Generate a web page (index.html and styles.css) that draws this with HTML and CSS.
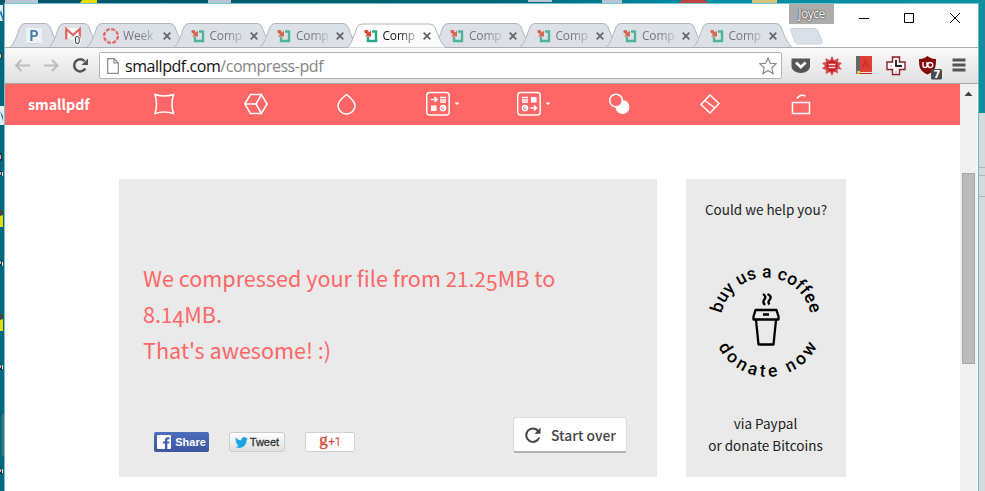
FILE: index.html
```html
<!DOCTYPE html>
<html lang="en">
<head>
<meta charset="utf-8">
<title>Smallpdf</title>
<link rel="stylesheet" href="styles.css">
</head>
<body>
<svg width="0" height="0" class="defs">
  <defs>
    <symbol id="tab" viewBox="0 0 99 24"><path d="M0 24C4 22 7 12 10 4Q11.500 .5 15 .5H83Q86.500 .5 88 4C91 12 95 22 99 24" stroke="#b2b6bb"/></symbol>
    <symbol id="pin" viewBox="0 0 51 24"><path d="M0 24C4 22 7 12 10 4Q11.500 .5 15 .5H35Q38.500 .5 40 4C43 12 47 22 51 24" stroke="#b2b6bb"/></symbol>
    <symbol id="fav" viewBox="0 0 16 16"><path d="M9 3.500H13V13H5V9" fill="none" stroke="#2aa886" stroke-width="2.400"/><path d="M8 2.500V8.500H2L4 6.500 1.500 4.500V2H4.500L6 4.500z" fill="#d34b2c"/></symbol>
    <symbol id="x" viewBox="0 0 10 10"><path d="M1.700 1.700l6.600 6.600M8.300 1.700L1.700 8.300" stroke="#666" stroke-width="1.800"/></symbol>
  </defs>
</svg>
<svg class="desktop" width="985" height="491">
  <defs><linearGradient id="sea"><stop stop-color="#005466"/><stop offset=".5" stop-color="#006476"/><stop offset=".7" stop-color="#008ca3"/><stop offset="1" stop-color="#10909f"/></linearGradient></defs>
  <rect width="985" height="4" fill="url(#sea)"/>
  <rect y="4" width="5" height="487" fill="#00687d"/>
  <path d="M5 0h33v3H5zM208 0h23v3h-23zM528 0h24v2h-24zM602 0h20v3h-20z" fill="#b9c5d2"/>
  <path d="M752 0h25v3h-25z" fill="#d2c47a"/>
  <path d="M82 0h15v3H80z" fill="#e9dd00"/>
  <path d="M682 0h22l5 3h-31z" fill="#bd4640"/>
  <path d="M0 5h3v16H0zM0 106h4v19H0z" fill="#e2edf5"/>
  <path d="M0 13l3 8v-4L1 10zM0 111l3 10v-5z" fill="#1b69b6"/>
  <path d="M0 214h3v13H0zM0 318h3v13H0z" fill="#e2df08"/>
  <path d="M0 210h3v5l-3 1zM0 314h3v5l-3 1z" fill="#444"/>
  <path d="M0 53h2v6H0zM0 153h2v8H0zM0 171h2v5H0zM0 260h2v6H0zM0 364h2v6H0zM0 468h2v6H0z" fill="#17344a"/>
  <path d="M0 54h1v4H0zM0 155h1v4H0zM0 172h1v3H0zM0 261h1v3H0zM0 365h1v3H0zM0 469h1v3H0z" fill="#f4b384"/>
  <path d="M2 172h1v4H2zM2 262h1v4H2zM2 365h1v4H2zM2 469h1v4H2z" fill="#d8f0ff"/>
  <path d="M3 414v42" stroke="#8b7771"/>
  <rect x="978" y="3" width="7" height="111" fill="#168b9c"/>
  <rect x="978" y="113" width="7" height="378" fill="#d9d9d9"/>
  <path d="M979 167.500h6M979 175.500h6M979 196.500h6" stroke="#b3b3b3"/>
</svg>
<div class="window">
  <div class="titlebar">
    <div class="tabs">
      <div class="tab pin"><svg class="bg"><use href="#pin"/></svg>
        <svg class="ico" viewBox="0 0 16 16"><rect width="16" height="16" rx="1.500" fill="#f4f6f8"/><path d="M1 15.500h14" stroke="#ccd3d9"/><text x="3.400" y="13.300" class="p">P</text></svg></div>
      <div class="tab pin"><svg class="bg"><use href="#pin"/></svg>
        <svg class="ico" viewBox="0 0 16 16"><rect x="0" y="0" width="15" height="11.500" fill="#fff"/><path d="M1.200 11.500V1l6.800 6L14.800 1v10.500" fill="none" stroke="#e0483e" stroke-width="2.200"/><path d="M3 11.500l4-3M13 11.500L9 8.500" stroke="#e3c6c4"/><text x="9.500" y="15.500" class="zero">0</text></svg></div>
      <div class="tab"><svg class="bg"><use href="#tab"/></svg>
        <svg class="ico" viewBox="0 0 16 16"><circle cx="8" cy="8" r="6.900" fill="none" stroke="#e6483d" stroke-width="2.300" stroke-dasharray="3.900 1.520"/></svg><span>Week</span><svg class="x"><use href="#x"/></svg></div>
      <div class="tab"><svg class="bg"><use href="#tab"/></svg><svg class="ico"><use href="#fav"/></svg><span>Comp</span><svg class="x"><use href="#x"/></svg></div>
      <div class="tab"><svg class="bg"><use href="#tab"/></svg><svg class="ico"><use href="#fav"/></svg><span>Comp</span><svg class="x"><use href="#x"/></svg></div>
      <div class="tab active"><svg class="bg"><use href="#tab"/></svg><svg class="ico"><use href="#fav"/></svg><span>Comp</span><svg class="x"><use href="#x"/></svg></div>
      <div class="tab"><svg class="bg"><use href="#tab"/></svg><svg class="ico"><use href="#fav"/></svg><span>Comp</span><svg class="x"><use href="#x"/></svg></div>
      <div class="tab"><svg class="bg"><use href="#tab"/></svg><svg class="ico"><use href="#fav"/></svg><span>Comp</span><svg class="x"><use href="#x"/></svg></div>
      <div class="tab"><svg class="bg"><use href="#tab"/></svg><svg class="ico"><use href="#fav"/></svg><span>Comp</span><svg class="x"><use href="#x"/></svg></div>
      <div class="tab"><svg class="bg"><use href="#tab"/></svg><svg class="ico"><use href="#fav"/></svg><span>Comp</span><svg class="x"><use href="#x"/></svg></div>
      <svg class="newtab" width="34" height="17"><path d="M3 .5H24Q27 .5 28 3L32 13Q33 16 30 16H9Q6 16 5 14L.8 3Q0 .5 3 .5Z" fill="#dae0e8" stroke="#cfd3d8"/></svg>
    </div>
    <div class="user">Joyce</div>
    <svg class="controls" width="104" height="14" viewBox="0 0 104 14"><path d="M0 7.500h10M45.500 2.500h9v9h-9zM91 2l10 10M101 2L91 12" fill="none" stroke="#000"/></svg>
  </div>
  <div class="toolbar">
    <svg class="nav" width="78" height="20" viewBox="0 0 78 20"><path d="M17 9.500H3M8.500 4L3 9.500 8.500 15M31 9.500h13.500M39 4l5.500 5.500L39 15" fill="none" stroke="#bdbdbd" stroke-width="2"/><path d="M71.500 5.200A6 6 0 1 0 72.300 12.500" fill="none" stroke="#555" stroke-width="2.500"/><path d="M75 2.500V9H68.500z" fill="#555"/></svg>
    <div class="omnibox">
      <svg width="12" height="16" viewBox="0 0 12 16"><path d="M.7.7H7L11.300 5V15.300H.7zM7 .7V5h4.300" fill="#fff" stroke="#8a8a8a" stroke-width="1.200"/></svg>
      <div class="url">smallpdf.com<span>/compress-pdf</span></div>
      <svg class="star" width="18" height="18" viewBox="0 0 18 18"><path d="M9 1l2.300 5.300 5.900.5-4.400 4 1.300 5.800L9 13.500l-5.100 3.100 1.300-5.800-4.400-4 5.900-.5z" fill="#fff" stroke="#818181" stroke-width="1.100"/></svg>
    </div>
    <div class="ext">
      <svg width="20" height="20" viewBox="0 0 20 20"><path d="M.5 2.500h18.500v7.500c0 4-4 7-9.200 7S.5 14 .5 10z" fill="#555"/><path d="M5 6.500l4.800 4.500 4.800-4.500" fill="none" stroke="#fff" stroke-width="2.800"/></svg>
      <svg width="20" height="20" viewBox="0 0 20 20"><path d="M10 0l2 4.500L16.500 2l-.5 4 4 1-3 3 3 3.500-4.500-.5.500 4.500-4-2L10 20l-2-4-4.500 2 .5-4-4-1.500L3 10 0 7l4-1-.5-4L8 4.500z" fill="#d14a4a"/><circle cx="10" cy="10" r="5.500" fill="#c31f25"/><path d="M6.500 8.500h7M6.500 11.500h7" stroke="#ffd9d6" stroke-width="1.500"/></svg>
      <svg width="20" height="20" viewBox="0 0 20 20"><path d="M2 0h16v16H2z" fill="#dd4035"/><path d="M2 0h4v18H2z" fill="#65676c"/><path d="M6 16h12v2H5z" fill="#f2ded8"/><path d="M5 17.500h13" stroke="#bd3029"/><path d="M8.500 12l3-8 3 8M9.500 9.500h4" fill="none" stroke="#c9342b" stroke-width="1.700"/><path d="M3 15h3l1 2-4 1z" fill="#f6c744"/></svg>
      <svg width="20" height="20" viewBox="0 0 20 20"><path d="M6.500 1h7v5h5.500v7.500h-5.500v5h-7v-5H1V6h5.500z" fill="#fff" stroke="#891f28" stroke-width="1.400"/><path d="M10 4v6h6" fill="none" stroke="#222" stroke-width="1.800"/><path d="M4 10h2M10 15v2" stroke="#999"/></svg>
      <svg width="24" height="24" viewBox="0 0 24 24"><path d="M1 3c4 0 6-1 8.500-3 2.500 2 4.500 3 8.500 3 0 9-1 12-8.500 15.500C2 15 1 12 1 3z" fill="#850509"/><path d="M5 6v3.500q0 2 2 2t2-2V6M12.300 6.500a2.500 2.500 0 1 1 0 5 2.500 2.500 0 0 1 0-5z" fill="none" stroke="#fff" stroke-width="1.400"/><rect x="13" y="13" width="11" height="10.500" rx="1.500" fill="#4b4b4b"/><text x="15.500" y="22" class="seven">7</text></svg>
      <svg width="14" height="20" viewBox="0 0 14 20"><path d="M.5 4h13M.5 9h13M.5 14h13" stroke="#555" stroke-width="2.800"/></svg>
    </div>
  </div>
  <div class="content">
    <div class="page">
      <div class="header">
        <div class="brand">smallpdf</div>
        <svg width="36" height="26" viewBox="0 0 36 26"><path d="M2 3.500Q11.500 6.500 20.500 3.500 17.500 13 20.500 22.500 11.500 19.500 2 22.500 5 13 2 3.500z"/></svg>
        <svg width="36" height="26" viewBox="0 0 36 26"><path d="M.8 13L6.500 3.500h11L23 13l-5.500 9.500h-11zM.8 13H12l5.500-9.500M12 13l5.500 9.500"/></svg>
        <svg width="36" height="26" viewBox="0 0 36 26"><path d="M11.500 3.500C8.500 6 3 10 3 14.500a8.500 8.500 0 0 0 17 0C20 10 14.500 6 11.500 3.500z"/></svg>
        <svg width="36" height="26" viewBox="0 0 36 26"><rect x=".7" y="1.500" width="22.500" height="22.500" rx="3"/><path d="M5 8.500h6M8.500 6l2.500 2.500L8.500 11M14 6.500h6M14 9h6M14 11h6"/><path class="solid" d="M5 14.500h5.500v5.500H5zM28.500 11.500h5L31 14z"/><circle cx="17" cy="17" r="2.600"/><path d="M17 14.500V17h2.500"/></svg>
        <svg width="36" height="26" viewBox="0 0 36 26"><rect x=".7" y="1.500" width="22.500" height="22.500" rx="3"/><path d="M5 6.500h6M5 9h6M5 11h6M13.500 17h6M17 14.500l2.500 2.500-2.500 2.500"/><path class="solid" d="M14 6h5.500v5.500H14zM28.500 11.500h5L31 14z"/><circle cx="8" cy="17" r="2.600"/><path d="M8 14.500V17h2.500"/></svg>
        <svg width="36" height="26" viewBox="0 0 36 26"><circle class="solid" cx="15.500" cy="16" r="7"/><circle cx="9" cy="9.500" r="6.300" class="hole"/></svg>
        <svg width="36" height="26" viewBox="0 0 36 26"><path d="M12 4L21 12.500 12 22 3 13.500zM6.800 9.500L17 17M12 4L6.800 9.500"/></svg>
        <svg width="36" height="26" viewBox="0 0 36 26"><path d="M3.500 11.500h17v11h-17zM8 7.500q3-5 8.500-2.500"/></svg>
      </div>
      <div class="main">
        <div class="card">
          <p class="message">We compressed your file from <span class="xn">2</span><span class="xn">1</span>.<span class="xn">2</span><span class="dn">5</span>MB to<br>8.<span class="xn">1</span><span class="dn">4</span>MB.<br>That's awesome! :)</p>
          <div class="actions">
            <div class="btn share"><svg width="14" height="14" viewBox="0 0 14 14"><rect width="14" height="14" rx="1" fill="#fff"/><path d="M8 14V8.500H6v-2h2V5Q8 2.300 10.800 2.300H12.500v2h-1.200q-1 0-1 1v1.200h2.200l-.3 2h-1.900V14z" fill="#4460ae"/></svg>Share</div>
            <div class="btn tweet"><svg width="13" height="11" viewBox="0 0 24 20"><path d="M24 2.400q-1.300.6-2.800.8Q22.700 2.200 23.300.5q-1.500.9-3.100 1.200A4.900 4.900 0 0 0 11.800 6.200Q5.600 5.800 1.700 1.100-.6 5 3.200 7.700 2 7.700 1 7.100q0 4 4 4.900-1.200.3-2.200.1.900 3 4.600 3.400Q4.300 18 0 17.600 3.500 20 7.500 20C16.500 20 21.800 12.700 21.500 4.900Q23 3.900 24 2.400z" fill="#1aa4e2"/></svg>Tweet</div>
            <div class="btn plus"><b>g</b>+1</div>
            <div class="again"><svg width="18" height="18" viewBox="0 0 18 18"><path d="M14.300 5.200A6.700 6.700 0 1 0 15.200 11.500" fill="none" stroke="#444" stroke-width="2"/><path d="M16.500 1.500v6.300h-6z" fill="#444"/></svg>Start over</div>
          </div>
        </div>
        <div class="side">
          <p>Could we help you?</p>
          <svg width="160" height="160" viewBox="686 242 160 160">
            <path id="top" d="M721.500 313.500A45.500 45.500 0 0 1 810.500 313.500" fill="none"/>
            <path id="bottom" d="M716 342A55.500 55.500 0 0 0 819 342" fill="none"/>
            <text class="ring"><textPath href="#top" startOffset="0" textLength="124">buy us a coffee</textPath></text>
            <text class="ring"><textPath href="#bottom" startOffset="5" textLength="122">donate now</textPath></text>
            <path d="M753.500 316.500l2-6.500h21l2 6.500v3h-25zM753.500 319.500h25M756 320l2.500 24.500h15L776 320" fill="none" stroke="#000" stroke-width="2.300" stroke-linejoin="round"/>
            <path d="M763 314.500h6M763 294q4 2.500 1 6-1.500 2.500 1 5M767.500 294q5 2.500 2 6-2 2 0 4.500" fill="none" stroke="#000" stroke-width="2.400"/>
          </svg>
          <p>via Paypal<br>or donate Bitcoins</p>
        </div>
      </div>
    </div>
    <div class="scrollbar"><svg width="9" height="5"><path d="M.5 5h8l-4-4.500z" fill="#444"/></svg><div class="thumb"></div></div>
  </div>
</div>
</body>
</html>
```
FILE: styles.css
```css
* { box-sizing: border-box; }
body { margin: 0; width: 985px; height: 491px; overflow: hidden; position: relative; background: #fff; font-family: "Noto Sans CJK SC", "Noto Sans", sans-serif; }
.defs, .desktop { position: absolute; top: 0; left: 0; }
.window { position: relative; margin: 3px 0 0 4px; width: 975px; height: 488px; border: 1px solid #76c4d2; border-right-color: #5dbed2; border-bottom: 0; background: #fff; display: flex; flex-direction: column; }
.titlebar { height: 43px; display: flex; align-items: flex-start; }
.tabs { display: flex; width: 785px; flex: none; padding: 19px 0 0 5px; font: 12px "Open Sans", sans-serif; }
.tab { position: relative; width: 99px; height: 24px; margin-right: -12.5px; flex: none; display: flex; align-items: center; padding: 1px 0 0 16px; }
.tab.pin { width: 51px; }
.bg { position: absolute; left: 0; top: 0; width: 100%; height: 24px; fill: #dce1e8; }
.ico, .tab span, .tab .x { position: relative; flex: none; }
.ico { width: 16px; height: 16px; opacity: .8; overflow: visible; }
.tab span { width: 35px; margin-left: 4px; letter-spacing: -.2px; background: linear-gradient(90deg, #707276 45%, #c3c8ce 96%); -webkit-background-clip: text; background-clip: text; color: transparent; }
.tab .x { width: 10px; height: 10px; margin-left: 4px; }
.tab.active { z-index: 2; }
.active .bg { fill: #fcfcfc; height: 25px; }
.active .ico { opacity: 1; }
.tab.active span { background-image: linear-gradient(90deg, #111 45%, #c8c8c8 96%); }
.p { font: bold 14px Roboto, sans-serif; fill: #21639a; }
.zero { font: 10px "Noto Sans", sans-serif; fill: #000; stroke: #fff; stroke-width: 2px; paint-order: stroke; }
.newtab { flex: none; margin: 5px 0 0 11px; }
.user { width: 45px; height: 20px; background: #acacac; color: #fff; font: 12px/19px "Open Sans", sans-serif; text-align: center; letter-spacing: -.5px; text-shadow: 0 0 2px #333, 0 0 1px #333; margin-left: -1px; }
.controls { margin: 7px 0 0 25px; }
.toolbar { height: 37px; border-top: 1px solid #aaadb1; border-bottom: 1px solid #a7a7a7; background: linear-gradient(#fafafa, #e0e0e0); display: flex; align-items: center; padding-left: 8px; }
.nav { flex: none; }
.omnibox { width: 683px; height: 27px; flex: none; margin-left: 8px; border: 1px solid #b4b4b4; border-radius: 2px; background: #fff; display: flex; align-items: center; padding: 0 4px 0 7px; }
.url { margin-left: 6px; flex: 1; font: 16px "Open Sans", sans-serif; letter-spacing: -.45px; color: #111; }
.url span { color: #858585; }
.ext { display: flex; align-items: center; gap: 11.8px; margin-left: 8.5px; }
.ext svg { flex: none; overflow: visible; }
.ext svg:nth-child(5) { margin-top: 4px; margin-right: -1px; }
.seven { font: bold 10px "DejaVu Sans", sans-serif; fill: #fff; }
.content { display: flex; flex: 1; }
.page { width: 955px; }
.header { height: 41px; background: #f66; display: flex; align-items: center; padding: 0 0 2px 23px; }
.brand { width: 125px; color: #fff; font-size: 14.2px; font-weight: 700; line-height: 41px; padding-top: 1px; }
.header svg { margin-right: 54.9px; flex: none; fill: none; stroke: #fff; stroke-width: 1.5; }
.header .solid { fill: #fff; stroke: none; }
.header .hole { fill: #f66; }
.main { display: flex; gap: 29px; padding: 54px 0 0 114px; }
.card { width: 538px; height: 298px; background: #eaeaea; padding: 81px 25px 0 24px; }
.message { margin: 0; height: 157px; color: #f66; font-size: 21.6px; line-height: 36px; white-space: nowrap; }
.message span { line-height: 0; }
.xn { font-size: 20.4px; }
.dn { vertical-align: -4px; }
.actions { display: flex; align-items: center; padding-left: 11px; }
.btn { height: 20px; margin-top: 14px; border-radius: 2px; font: bold 11px "Liberation Sans", sans-serif; display: flex; align-items: center; justify-content: center; gap: 4px; }
.share { width: 55px; background: linear-gradient(#4d6dbd, #3d55a0); color: #fff; }
.tweet { width: 56px; margin-left: 20px; border: 1px solid #ccc; border-radius: 3px; background: linear-gradient(#fff, #dfdfdf); color: #333; font-weight: 500; gap: 2px; -webkit-text-stroke: .3px #333; }
.plus { width: 50px; margin-left: 20px; border: 1px solid #d2d2d2; background: #fff; color: #d6493c; font: 12px Roboto, sans-serif; letter-spacing: -.5px; gap: 1px; }
.plus b { font: 17px/12px "Liberation Serif", serif; -webkit-text-stroke: .4px #d6493c; margin-top: -5px; }
.again { width: 114px; height: 36px; margin-left: auto; margin-right: 5px; background: #fff; border: 1px solid #ddd; border-bottom: 2px solid #b2b2b2; border-radius: 3px; display: flex; align-items: center; gap: 9px; padding-left: 10px; color: #444; font-size: 13.9px; font-weight: 500; white-space: nowrap; }
.side { width: 160px; height: 298px; background: #eaeaea; text-align: center; font-size: 13.5px; line-height: 22px; color: #222; padding-top: 19px; }
.side p { margin: 0; white-space: nowrap; }
.side p:last-child { margin-left: -1px; }
.side svg { display: block; margin: 22px 0 10px; }
.ring { font: 500 17.5px Roboto, sans-serif; fill: #000; }
.scrollbar { width: 17px; background: #f0f0f0; padding: 7px 2px 0 2px; display: flex; flex-direction: column; }
.scrollbar svg { margin-left: 2px; }
.thumb { height: 191px; margin-top: 77px; background: #bbb; border: 1px solid #a7a7a7; }
```
